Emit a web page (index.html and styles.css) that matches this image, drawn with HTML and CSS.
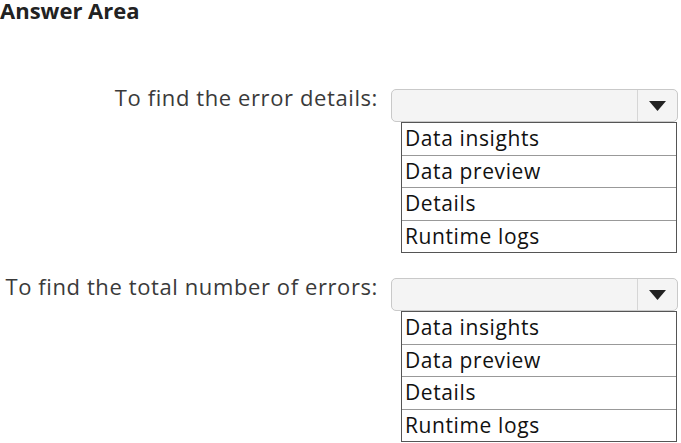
FILE: index.html
```html
<!DOCTYPE html>
<html>
<head>
<meta charset="utf-8">
<link rel="stylesheet" href="styles.css">
</head>
<body>
<h1 class="title">Answer Area</h1>
<div class="qa">
  <div class="label">To find the error details:</div>
  <div class="field">
    <div class="select">
      <span class="value"></span>
      <span class="btn"><svg width="17" height="10" viewBox="0 0 17 10"><path d="M0 0H17L8.5 10Z" fill="#222"/></svg></span>
    </div>
    <ul class="options">
      <li>Data insights</li>
      <li>Data preview</li>
      <li>Details</li>
      <li>Runtime logs</li>
    </ul>
  </div>
  <div class="label">To find the total number of errors:</div>
  <div class="field">
    <div class="select">
      <span class="value"></span>
      <span class="btn"><svg width="17" height="10" viewBox="0 0 17 10"><path d="M0 0H17L8.5 10Z" fill="#222"/></svg></span>
    </div>
    <ul class="options">
      <li>Data insights</li>
      <li>Data preview</li>
      <li>Details</li>
      <li>Runtime logs</li>
    </ul>
  </div>
</div>
</body>
</html>
```
FILE: styles.css
```css
html, body {
  margin: 0;
  padding: 0;
  background: #fff;
}
body {
  font-family: "Open Sans", "Noto Sans", sans-serif;
  color: #222;
}
.title {
  margin: 0;
  padding: 0;
  font-size: 22px;
  font-weight: 700;
  line-height: 21px;
  color: #222;
}
.qa {
  display: grid;
  grid-template-columns: 378px 287px;
  column-gap: 13px;
  row-gap: 25px;
  margin-top: 68px;
}
.label {
  text-align: right;
  font-size: 22px;
  line-height: 16px;
  color: #3a3a3a;
  white-space: nowrap;
  letter-spacing: 0.6px;
}
.field {
  display: flex;
  flex-direction: column;
}
.select {
  display: flex;
  height: 31px;
  border: 1px solid #c9c9c9;
  border-radius: 5px;
  background: #f4f4f4;
}
.value {
  flex: 1;
}
.btn {
  width: 39px;
  border-left: 1px solid #d6d6d6;
  display: flex;
  align-items: center;
  justify-content: center;
}
.options {
  list-style: none;
  margin: 0 0 0 10px;
  padding: 0;
  width: 274px;
  border: 1px solid #555;
  background: #fff;
}
.options li {
  height: 31.5px;
  line-height: 31px;
  padding-left: 3px;
  font-size: 21px;
  color: #111;
  letter-spacing: 0.6px;
  border-top: 1px solid #999;
}
.options li:first-child {
  border-top: none;
}
```
